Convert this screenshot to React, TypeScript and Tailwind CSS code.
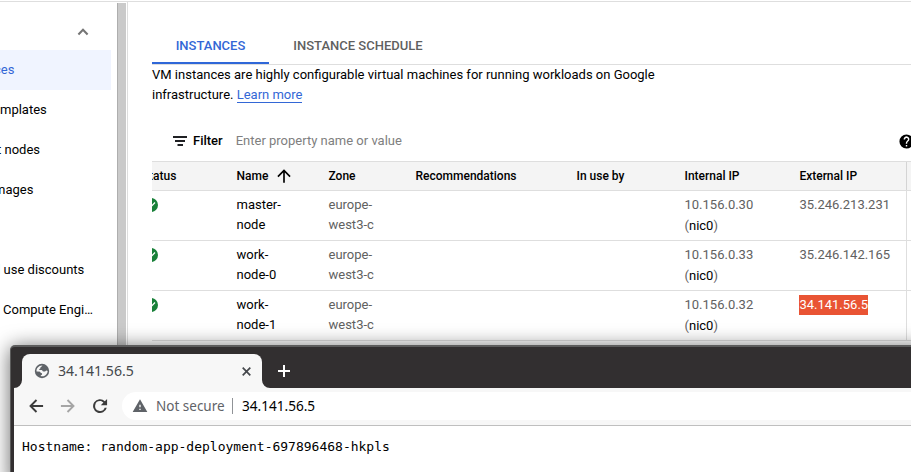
import type { ReactNode } from "react";

const navItems = [
  { text: "ces", shift: "-ml-[6px]", active: true },
  { text: "mplates", shift: "ml-0" },
  { text: "t nodes", shift: "-ml-[3px]" },
  { text: "mages", shift: "-ml-[6px]" },
  { text: "", shift: "" },
  { text: "d use discounts", shift: "-ml-[7px]" },
  { text: "Compute Engi…", shift: "ml-[3px]" },
];

const rows = [
  { name: ["master-", "node"], internal: "10.156.0.30", external: "35.246.213.231" },
  { name: ["work-", "node-0"], internal: "10.156.0.33", external: "35.246.142.165" },
  { name: ["work-", "node-1"], internal: "10.156.0.32", external: "34.141.56.5", selected: true },
];

const columns = "grid grid-cols-[84.5px_92px_87px_161px_108px_114.9px_106.6px_1fr]";

function Icon({ d, className }: { d: string; className: string }) {
  return (
    <svg viewBox="0 0 24 24" className={`shrink-0 ${className}`} fill="currentColor">
      <path d={d} />
    </svg>
  );
}

function Sidebar() {
  return (
    <nav className="w-[117px] shrink-0 overflow-hidden">
      <div className="flex h-12 justify-end pr-[24px] pt-5">
        <Icon className="h-5 w-5 text-[#757575]" d="M12 7.6l-6.4 6.4 1.8 1.8L12 11.2l4.6 4.6 1.8-1.8z" />
      </div>
      {navItems.map((item, i) => (
        <div
          key={i}
          className={`flex h-10 w-[111px] items-center whitespace-pre ${item.active ? "bg-[#f0f4ff] text-[#3367d6]" : ""}`}
        >
          <span className={item.shift}>{item.text}</span>
        </div>
      ))}
    </nav>
  );
}

function HeadCell({ children }: { children?: ReactNode }) {
  return <div className="flex items-center whitespace-nowrap">{children}</div>;
}

function StatusOk() {
  return (
    <svg className="-ml-2 h-[14px] w-[14px]" viewBox="0 0 14 14">
      <circle cx="7" cy="7" r="7" fill="#188038" />
      <path d="M3.4 7.2l2.6 2.5 5-5.2" fill="none" stroke="white" strokeWidth="1.3" />
    </svg>
  );
}

function InstancesTable() {
  return (
    <div className="overflow-hidden">
      <div className={`${columns} h-[30px] border-y border-[#dedede] bg-[#f4f4f4] text-[12px] font-medium`}>
        <HeadCell>
          <span className="-ml-[3px]">tatus</span>
        </HeadCell>
        <HeadCell>
          Name
          <Icon className="ml-[6px] h-5 w-5" d="M4 12l1.41 1.41L11 7.83V20h2V7.83l5.58 5.59L20 12l-8-8z" />
        </HeadCell>
        <HeadCell>Zone</HeadCell>
        <HeadCell>Recommendations</HeadCell>
        <HeadCell>In use by</HeadCell>
        <HeadCell>Internal IP</HeadCell>
        <HeadCell>External IP</HeadCell>
        <div className="border-l border-[#d4d4d4]" />
      </div>
      {rows.map((row) => (
        <div key={row.internal} className={`${columns} h-[50px] border-b border-[#dedede] leading-5 text-[#616161]`}>
          <div className="pt-[7px]">
            <StatusOk />
          </div>
          <div className="pt-1 text-black">
            {row.name[0]}
            <br />
            {row.name[1]}
          </div>
          <div className="pt-1">
            europe-
            <br />
            west3-c
          </div>
          <div />
          <div />
          <div className="pt-1">
            <div className="h-[21px]">{row.internal}</div>
            (<span className="text-black">nic0</span>)
          </div>
          <div className="pt-1">
            <span className={row.selected ? "inline-block h-5 bg-[#e95434] text-white" : ""}>{row.external}</span>
          </div>
          <div className="border-l border-[#dedede]" />
        </div>
      ))}
    </div>
  );
}

function Main() {
  return (
    <main className="min-w-0 flex-1 border-l border-[#dedede] pl-6">
      <div className="mt-[24px] flex h-[39px] border-b border-[#dedede] font-medium">
        <div className="flex h-[38px] w-[117px] items-center justify-center border-b-2 border-[#2f67d8] pt-[3px] text-[#3367d6]">
          INSTANCES
        </div>
        <div className="flex h-[38px] items-center pl-[24.3px] pt-px text-[#5f5f5f]">INSTANCE SCHEDULE</div>
      </div>
      <p className="w-[520px] leading-5">
        VM instances are highly configurable virtual machines for running workloads on Google infrastructure.{" "}
        <a className="border-b border-[#3367d6] text-[#3367d6]">Learn more</a>
      </p>
      <div className="flex h-14 items-center pl-[21px] pt-4">
        <svg className="h-[10px] w-[14px]" viewBox="0 0 14 10" fill="#202124">
          <path d="M0 0h14v2H0zM2 4h10v2H2zM4.5 8h5.5v2H4.5z" />
        </svg>
        <span className="ml-[6px] font-medium">Filter</span>
        <span className="ml-[13px] text-[#808080]">Enter property name or value</span>
        <Icon
          className="-mr-1 ml-auto h-[17px] w-[17px]"
          d="M12 2a10 10 0 1 0 0 20 10 10 0 0 0 0-20zm1 17h-2v-2h2zm2.07-7.75-.9.92C13.45 12.9 13 13.5 13 15h-2v-.5c0-1.1.45-2.1 1.17-2.83l1.24-1.26A2 2 0 1 0 10 9H8a4 4 0 1 1 7.07 2.25z"
        />
      </div>
      <InstancesTable />
    </main>
  );
}

function BrowserWindow() {
  return (
    <div className="absolute left-[10px] top-[345px] h-[140px] w-[920px] rounded-tl-[5px] border-l border-t-2 border-[#5c5c5c] bg-[#322f30] pl-[3px] font-['Noto_Sans',sans-serif] shadow-[0_2px_20px_rgba(0,0,0,0.6)]">
      <div className="flex h-[41px] items-end">
        <svg className="h-2 w-2 shrink-0" viewBox="0 0 8 8">
          <path d="M8 0v8H0a8 8 0 0 0 8-8z" fill="#f7f7f7" />
        </svg>
        <div className="flex h-[34px] w-[240px] items-center rounded-t-lg bg-[#f7f7f7] pl-3">
          <svg className="h-4 w-4" viewBox="0 0 16 16">
            <circle cx="8" cy="8" r="7.2" fill="#5f6368" />
            <path
              d="M8.6 2.4C7.4 3 7.7 4.1 6.7 4.3c-.7.2.1 1.2-.8 1.5-.9.1-1 .9-.2 1.2h1.9c1.1.1.6 1.5 1.8 1.5h1.5c1 0 .6-1 1.500-1l1.300.6c-.1 2.400-1.900 4.600-4.200 5.100-1 .2-2.200 0-2.900-.3.100-1.300 1.800-.8 1.500-2.200-.1-1-1.500-.4-1.800-1.500-.2-.8-1.300-.6-3.700-.8C2.100 5.400 4.800 2.100 8.600 2.400z"
              fill="#f7f7f7"
            />
          </svg>
          <span className="ml-2 text-[14.1px] text-[#45484c]">34.141.56.5</span>
          <svg className="ml-auto mr-[11.5px] h-[9px] w-[9px]" viewBox="0 0 9 9" stroke="#45484c" strokeWidth="1.7">
            <path d="M.7.7l7.6 7.6M8.3.7L.7 8.3" />
          </svg>
        </div>
        <svg className="h-2 w-2 shrink-0" viewBox="0 0 8 8">
          <path d="M0 0v8h8a8 8 0 0 1-8-8z" fill="#f7f7f7" />
        </svg>
        <svg className="mb-[11px] ml-2 h-3 w-3" viewBox="0 0 12 12" stroke="white" strokeWidth="2">
          <path d="M6 0v12M0 6h12" />
        </svg>
      </div>
      <div className="flex h-[38px] items-center border-b border-[#bfbfbf] bg-[#f7f7f7] pb-px pl-3">
        <Icon className="h-5 w-5 text-[#3c3c3c]" d="M20.5 10.800H8.300l5.100-5.200L11.800 4l-8 8 8 8 1.600-1.600-5.100-5.200h12.200z" />
        <Icon className="ml-3 h-5 w-5 text-[#a5a5a5]" d="M3.500 10.800h12.200l-5.100-5.200L12.200 4l8 8-8 8-1.600-1.600 5.100-5.200H3.500z" />
        <Icon
          className="ml-3 h-5 w-5 text-[#3c3c3c]"
          d="M17.800 6.200A8.300 8.300 0 1 0 20.100 14h-2.500A5.900 5.900 0 1 1 12 6.100c1.600 0 3.100.7 4.100 1.800L13 11h7.500V3.500z"
        />
        <div className="ml-3 flex h-7 flex-1 items-center rounded-l-full bg-white pl-[10px]">
          <Icon className="h-4 w-4 text-[#5f6368]" d="M1 21h22L12 2 1 21zm12-3h-2v-2h2v2zm0-4h-2v-4h2v4z" />
          <span className="ml-2 w-[69px] whitespace-nowrap text-[13.5px] text-[#5f6368]">Not secure</span>
          <span className="ml-[7px] h-4 w-px bg-[#909397]" />
          <span className="ml-[9px] text-[13.6px] text-black">34.141.56.5</span>
        </div>
      </div>
      <div className="h-[60px] bg-white pl-2 pt-[13px] font-['DejaVu_Sans_Mono',monospace] text-[13px] leading-4">
        Hostname: random-app-deployment-697896468-hkpls
      </div>
    </div>
  );
}

export default function App() {
  return (
    <div className="relative h-[472px] w-[911px] overflow-hidden bg-white pt-px font-[Roboto,sans-serif] text-[13px] text-black">
      <div className="h-px bg-[#dedede]" />
      <div className="flex h-[470px]">
        <Sidebar />
        <div className="mt-px w-[9px] shrink-0 border-l border-[#aeaeae] bg-[#cacaca]" />
        <div className="w-px shrink-0" />
        <Main />
      </div>
      <BrowserWindow />
    </div>
  );
}
